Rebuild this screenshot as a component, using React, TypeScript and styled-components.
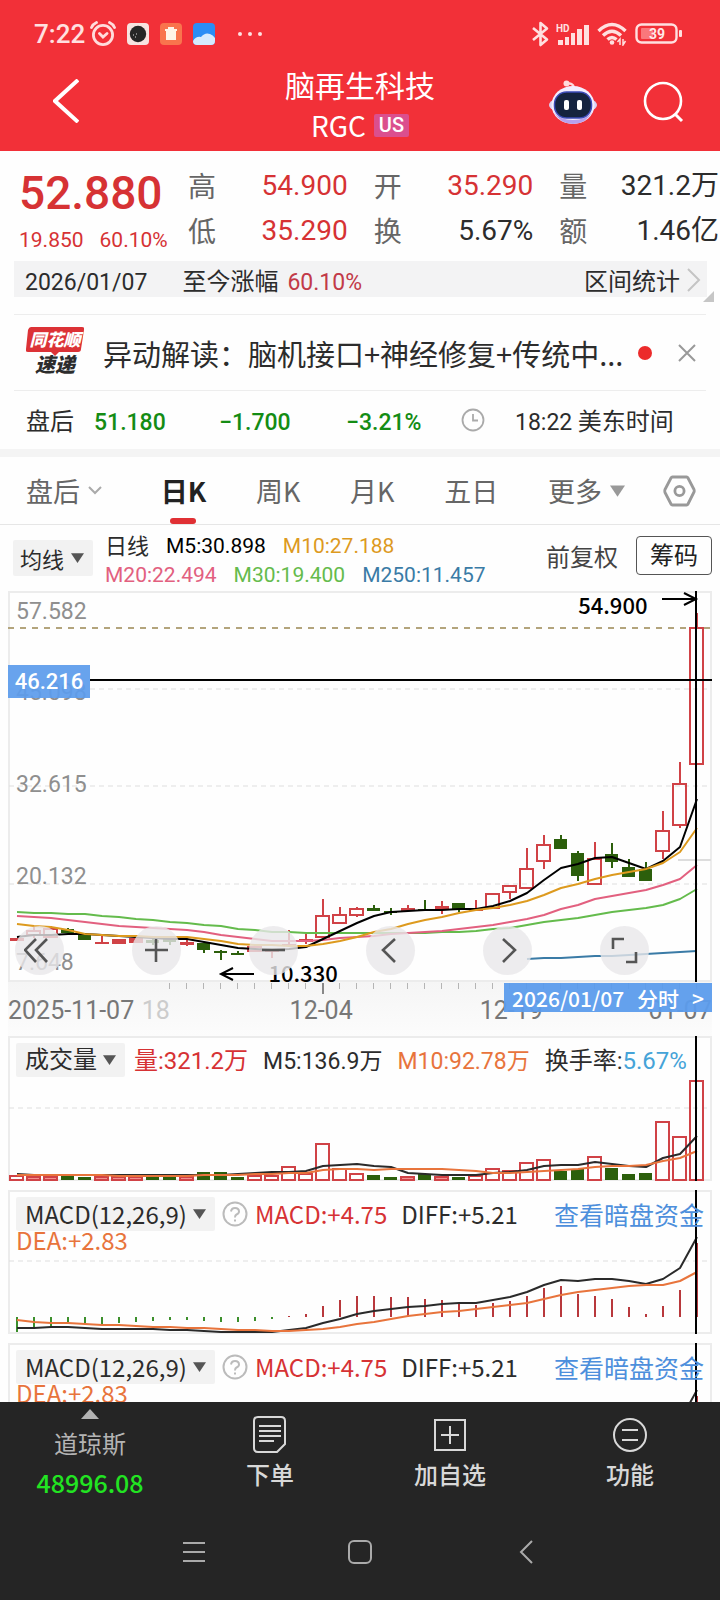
import React from 'react';
import styled, { createGlobalStyle, css } from 'styled-components';

const NUM = `Roboto, "Noto Sans CJK SC", sans-serif`;
const TEXT = `"Noto Sans CJK SC", Roboto, sans-serif`;
const RED = '#d63234';
const CANDLE_RED = '#d04246';
const CANDLE_GREEN = '#2c5f0c';

const Global = createGlobalStyle`
  *, *::before, *::after { box-sizing: border-box; }
  body { margin: 0; background: #fefefe; color: #2c2c2c; font-family: ${TEXT}; }
  button, select { font: inherit; color: inherit; border: 0; background: none; padding: 0; margin: 0; cursor: pointer; }
  a { text-decoration: none; }
  svg { display: block; flex: none; }
  dl, dt, dd, h1, p { margin: 0; font-weight: inherit; }
`;

/* ---------- page shell ---------- */

const Page = styled.div`
  height: 100vh;
  display: flex;
  flex-direction: column;
  overflow: hidden;
`;

const Content = styled.main`
  flex: 1;
  min-height: 0;
  overflow: hidden;
`;

/* ---------- header ---------- */

const Top = styled.header`
  background: #f23038;
  color: #fff;
  flex: none;
  height: 151px;
`;

const StatusBar = styled.div`
  height: 68px;
  padding: 0 38px 0 34px;
  display: flex;
  align-items: center;
  justify-content: space-between;
  color: #ffe0e0;
`;

const StatusGroup = styled.div<{ $gap: number }>`
  display: flex;
  align-items: center;
  gap: ${p => p.$gap}px;
`;

const Clock = styled.span`
  font: 500 26px/32px ${NUM};
`;

const TitleBar = styled.div`
  display: grid;
  grid-template-columns: 1fr auto 1fr;
  align-items: start;
  padding: 0 36px;
`;

const BackButton = styled.button`
  display: flex;
  margin: 11px 0 0 17px;
`;

const TitleText = styled.div`
  display: flex;
  flex-direction: column;
  align-items: center;
`;

const StockName = styled.h1`
  font-size: 30px;
  line-height: 32px;
  font-weight: 400;
`;

const Ticker = styled.p`
  display: flex;
  align-items: center;
  gap: 8px;
  font-size: 28px;
  line-height: 50px;
`;

const Market = styled.span`
  background: #db4f8e;
  font: 500 20px/23px ${NUM};
  padding: 0 5px;
  border-radius: 2px;
`;

const HeaderActions = styled.div`
  display: flex;
  justify-content: flex-end;
  align-items: center;
  gap: 44px;
  margin-top: 11px;
`;

/* ---------- quote ---------- */

const Quote = styled.section`
  display: flex;
  height: 110px;
  padding: 12px 1px 0 19px;
`;

const PriceBlock = styled.div`
  flex: none;
  width: 169px;
  color: ${RED};
  font-family: ${NUM};
`;

const Price = styled.p`
  font-size: 46px;
  line-height: 60px;
  font-weight: 500;
`;

const Change = styled.p`
  display: flex;
  gap: 16px;
  font-size: 21px;
  line-height: 34px;
`;

const Stats = styled.dl`
  flex: 1;
  display: grid;
  grid-template-columns: repeat(3, 1fr);
  grid-auto-rows: 45px;
  column-gap: 26px;
`;

const Stat = styled.div<{ $up?: boolean }>`
  display: flex;
  justify-content: space-between;
  font-size: 28px;
  line-height: 45px;
  white-space: nowrap;
  dt { color: #666; }
  dd { font-family: ${NUM}; color: ${p => (p.$up ? RED : '#2c2c2c')}; }
`;

const RangeBar = styled.div`
  position: relative;
  margin: 0 13px 0 14px;
  height: 36px;
  padding: 2px 6px 0 11px;
  background: #f3f3f4;
  display: flex;
  align-items: baseline;
  font-size: 24px;
  line-height: 34px;
  &::after {
    content: '';
    position: absolute;
    right: -7px;
    bottom: -5px;
    border-style: solid;
    border-width: 0 0 11px 11px;
    border-color: transparent transparent #c6c6c6 transparent;
  }
`;

const Figure = styled.span<{ $color?: string; $ml?: number }>`
  font-family: ${NUM};
  font-size: 23px;
  color: ${p => p.$color ?? 'inherit'};
  margin-left: ${p => p.$ml ?? 0}px;
`;

const RangeLabel = styled.span`
  margin-left: 35px;
`;

const RangeButton = styled.button`
  margin-left: auto;
  display: flex;
  align-items: center;
  gap: 7px;
`;

/* ---------- news and after-hours ---------- */

const News = styled.section`
  margin: 17px 14px 0;
  height: 76px;
  padding: 0 10px 0 12px;
  display: flex;
  align-items: center;
  border-top: 1px solid #ededed;
`;

const NewsTitle = styled.a`
  flex: 1;
  min-width: 0;
  margin-left: 19px;
  font-size: 29px;
  line-height: 40px;
  color: #2c2c2c;
  white-space: nowrap;
  overflow: hidden;
`;

const Dot = styled.span`
  width: 14px;
  height: 14px;
  border-radius: 50%;
  background: #ec2b2b;
  margin-right: 26px;
`;

const AfterHours = styled.section`
  margin: 0 14px;
  padding: 0 12px;
  height: 59px;
  display: grid;
  grid-template-columns: 68px 125px 127px 115px 54px 1fr;
  align-content: center;
  align-items: baseline;
  border-top: 1px solid #ededed;
  font-size: 24px;
  white-space: nowrap;
  svg { align-self: center; }
`;

const Down = styled.span`
  font: 500 23px/30px ${NUM};
  color: #148c14;
`;

/* ---------- tabs ---------- */

const Tabs = styled.nav`
  border-top: 8px solid #f4f4f4;
  border-bottom: 1px solid #e6e6e6;
  height: 76px;
  padding: 0 24px 0 26px;
  display: flex;
  gap: 38px;
`;

const TabGroup = styled.div`
  flex: 1;
  display: flex;
  justify-content: space-between;
`;

const Tab = styled.button<{ $active?: boolean; $pad?: number }>`
  position: relative;
  display: flex;
  align-items: center;
  gap: 8px;
  font-size: 27px;
  color: #666;
  padding-right: ${p => p.$pad ?? 0}px;
  ${p =>
    p.$active &&
    css`
      color: #222;
      font-weight: 700;
      &::after {
        content: '';
        position: absolute;
        left: 50%;
        bottom: 0;
        width: 26px;
        height: 6px;
        margin-left: -13px;
        border-radius: 3px;
        background: #e03034;
      }
    `}
`;

/* ---------- indicator legend ---------- */

const Legend = styled.section`
  height: 66px;
  padding: 0 8px 0 13px;
  display: flex;
  align-items: center;
`;

const Picker = styled.label<{ $height: number }>`
  display: inline-flex;
  align-items: center;
  flex: none;
  background: #f2f2f2;
  border-radius: 2px;
  height: ${p => p.$height}px;
  svg { margin-left: -24px; pointer-events: none; }
  padding-right: 9px;
`;

const PickerSelect = styled.select<{ $inset: number; $size: number }>`
  appearance: none;
  font-size: ${p => p.$size}px;
  line-height: 34px;
  padding: 0 30px 0 ${p => p.$inset}px;
  color: #2c2c2c;
`;

const Averages = styled.div`
  flex: 1;
  margin-left: 12px;
  padding-top: 6px;
  font: 21px/29px ${NUM};
`;

const AverageLine = styled.div<{ $gap: number }>`
  display: flex;
  gap: ${p => p.$gap}px;
  white-space: nowrap;
`;

const Period = styled.span`
  font-size: 22px;
`;

const Tint = styled.span<{ $color: string }>`
  color: ${p => p.$color};
`;

const PlainButton = styled.button`
  font-size: 24px;
  line-height: 34px;
  padding-bottom: 4px;
  color: #444;
`;

const OutlineButton = styled(PlainButton)`
  margin: -6px 0 0 18px;
  width: 76px;
  height: 39px;
  border: 1px solid #555;
  border-radius: 4px;
  color: #222;
`;

/* ---------- charts ---------- */

const Frame = styled.section`
  position: relative;
  margin: 0 8px;
`;

const Panel = styled.section`
  margin: 0 8px 9px;
  display: grid;
  > * { grid-area: 1 / 1; }
`;

const PanelHead = styled.div`
  z-index: 1;
  align-self: start;
  padding: 7px 8px 0;
  white-space: nowrap;
`;

const PanelRow = styled.div<{ $gap: number; $font: string }>`
  display: flex;
  align-items: center;
  gap: ${p => p.$gap}px;
  font: ${p => p.$font};
`;

const Readout = styled.span<{ $color?: string; $size?: number }>`
  padding-top: 3px;
  font-size: ${p => p.$size ?? 23}px;
  color: ${p => p.$color ?? '#2c2c2c'};
`;

const DiffValue = styled.span`
  margin-left: 7px;
`;

const DarkPoolLink = styled.a`
  margin-left: auto;
  font-size: 25px;
  color: #4d8fdc;
`;

const SecondLine = styled.p`
  margin-top: -2px;
  font-size: 24px;
  line-height: 21px;
  color: #e8743c;
`;

const Plot = styled.svg`
  width: 100%;
  height: auto;
`;

const AxisLabel = styled.span<{ $top: number }>`
  position: absolute;
  left: 8px;
  top: ${p => p.$top}px;
  font: 23px/30px ${NUM};
  color: #8f8f8f;
`;

const PriceTag = styled.span`
  position: absolute;
  left: 0;
  top: 74px;
  width: 82px;
  font: 500 22px/33px ${NUM};
  text-align: center;
  color: #fff;
  background: rgba(92, 156, 236, 0.93);
`;

const Extreme = styled.span<{ $left: string; $top: number }>`
  position: absolute;
  left: ${p => p.$left};
  top: ${p => p.$top}px;
  font: 500 22px/26px ${TEXT};
  color: #000;
`;

const ChartTools = styled.div`
  position: absolute;
  left: 1%;
  right: 9%;
  top: 335px;
  display: flex;
  justify-content: space-between;
`;

const Tool = styled.button`
  width: 49px;
  height: 49px;
  border-radius: 50%;
  background: rgba(233, 231, 234, 0.8);
  display: grid;
  place-items: center;
`;

const DateAxis = styled.div`
  position: relative;
  margin: 0 8px;
  height: 54px;
  background: linear-gradient(#f5f5f5, #fcfcfc);
`;

const DateRow = styled.div`
  display: flex;
  font: 25px/36px ${NUM};
  color: #777;
  margin-top: -1px;
`;

const DateText = styled.span<{ $width?: string; $color?: string }>`
  width: ${p => p.$width ?? 'auto'};
  color: ${p => p.$color ?? 'inherit'};
  white-space: nowrap;
`;

const DateTag = styled.button`
  position: absolute;
  right: 0;
  top: 1px;
  width: 208px;
  height: 29px;
  padding: 2px 8px 0;
  display: flex;
  justify-content: space-between;
  align-items: center;
  font: 500 21px/27px ${TEXT};
  color: #fff;
  background: rgba(92, 156, 236, 0.95);
`;

/* ---------- bottom bars ---------- */

const Bottom = styled.footer`
  flex: none;
  height: 198px;
  background: #252525;
  color: #d8d8d8;
`;

const Actions = styled.div`
  display: grid;
  grid-template-columns: repeat(4, 1fr);
  height: 106px;
`;

const Action = styled.button`
  display: flex;
  flex-direction: column;
  align-items: center;
  padding-top: 14px;
  font-size: 24px;
  line-height: 40px;
  font-weight: 500;
`;

const IndexButton = styled.button`
  display: flex;
  flex-direction: column;
  align-items: center;
  padding-top: 7px;
  font-size: 24px;
  line-height: 40px;
  color: #b4b4b4;
  svg { margin-bottom: 4px; }
`;

const IndexValue = styled.span`
  font: 500 25px/39px ${TEXT};
  color: #22e422;
`;

const SystemNav = styled.nav`
  display: flex;
  justify-content: center;
  align-items: center;
  gap: 142px;
  height: 88px;
`;

const IconButton = styled.button`
  display: flex;
`;

const SystemButton = styled.button`
  width: 24px;
  display: flex;
  justify-content: center;
`;

/* ---------- data ---------- */

// kind, high, low, body top, body bottom for each trading day, in plot units
type Candle = ['r' | 'g', number, number, number, number];
const candles: Candle[] = [
  ['r', 347, 350, 347, 350], ['r', 336, 347, 339, 345], ['r', 335, 347, 337, 347],
  ['g', 337, 342, 338, 342], ['g', 343, 349, 343, 349], ['r', 345, 353, 351, 353],
  ['r', 348, 353, 348, 353], ['r', 347, 352, 347, 352], ['g', 347, 354, 349, 352],
  ['g', 347, 354, 348, 351], ['r', 349, 355, 351, 354], ['g', 352, 362, 352, 359],
  ['g', 359, 369, 360, 362], ['g', 360, 364, 362, 364], ['r', 354, 361, 355, 361],
  ['r', 358, 367, 358, 361], ['r', 339, 356, 353, 355], ['r', 343, 353, 348, 351],
  ['r', 308, 347, 324, 347], ['r', 316, 333, 323, 333], ['r', 316, 326, 317, 325],
  ['g', 314, 320, 317, 320], ['g', 317, 324, 320, 322], ['r', 314, 320, 317, 320],
  ['g', 309, 320, 318, 320], ['r', 310, 323, 315, 319], ['g', 312, 321, 312, 319],
  ['r', 309, 320, 317, 320], ['r', 302, 318, 302, 318], ['r', 294, 308, 294, 302],
  ['r', 257, 298, 277, 298], ['r', 244, 278, 253, 271], ['g', 244, 258, 248, 258],
  ['g', 260, 290, 262, 285], ['r', 251, 294, 267, 294], ['g', 252, 277, 263, 271],
  ['g', 268, 286, 276, 286], ['g', 271, 290, 278, 290], ['r', 220, 268, 239, 261],
  ['r', 171, 237, 192, 235], ['r', 22, 174, 36, 174],
];

const averages: { color: string; from: number; ys: number[] }[] = [
  { color: '#64bb4c', from: 0, ys: [321, 322, 322, 323, 323, 325, 326, 328, 329, 331, 332, 334, 335, 338, 339, 341, 341, 342, 342, 342, 342, 342, 342, 342, 342, 341, 341, 340, 338, 337, 334, 331, 329, 327, 324, 321, 319, 317, 314, 308, 298] },
  { color: '#e2607f', from: 0, ys: [325, 326, 327, 329, 331, 333, 335, 336, 337, 338, 339, 341, 344, 346, 348, 350, 350, 350, 349, 347, 346, 345, 343, 342, 341, 340, 338, 336, 334, 331, 328, 324, 318, 314, 308, 305, 302, 299, 294, 288, 274] },
  { color: '#000', from: 0, ys: [346, 344, 344, 343, 343, 344, 345, 346, 347, 348, 348, 351, 354, 357, 358, 359, 358, 356, 348, 340, 332, 325, 321, 320, 319, 319, 318, 318, 315, 310, 302, 289, 277, 273, 267, 266, 272, 278, 270, 256, 208] },
  { color: '#dd9a1e', from: 0, ys: [333, 335, 336, 339, 343, 344, 345, 345, 346, 346, 346, 348, 350, 353, 354, 354, 355, 355, 353, 350, 346, 341, 338, 333, 329, 326, 322, 319, 317, 314, 310, 304, 297, 293, 288, 284, 281, 278, 272, 261, 237] },
  { color: '#3a7ba6', from: 30, ys: [368, 367, 367, 366, 365, 365, 364, 363, 362, 361, 360] },
];

const volumeTops = [139, 140, 140, 139, 141, 140, 140, 140, 141, 141, 140, 136, 136, 141, 139, 139, 130, 137, 107, 132, 137, 139, 141, 140, 138, 140, 141, 139, 132, 134, 126, 123, 135, 133, 120, 132, 138, 137, 85, 100, 44];
const volumeM5 = [138, 139, 139, 139, 139, 139, 139, 139, 139, 139, 139, 139, 139, 138, 137, 136, 136, 135, 130, 129, 128, 130, 131, 137, 138, 139, 139, 139, 137, 136, 134, 130, 129, 129, 126, 128, 130, 131, 122, 118, 100];
const volumeM10 = [139, 139, 139, 139, 139, 139, 140, 140, 140, 140, 140, 139, 139, 139, 138, 138, 137, 137, 134, 133, 133, 134, 133, 133, 133, 133, 134, 135, 137, 137, 136, 135, 134, 133, 131, 130, 130, 129, 125, 122, 115];

const macdEnds = [142, 139, 136, 133, 133, 134, 133, 132, 131, 130, 130, 131, 132, 132, 131, 129, 126, 124, 116, 110, 106, 106, 107, 107, 109, 110, 114, 115, 113, 111, 106, 98, 96, 104, 106, 109, 117, 124, 116, 100, 53];
const diff = [138, 138, 137, 137, 138, 139, 139, 139, 139, 140, 140, 141, 142, 142, 142, 142, 140, 138, 133, 129, 124, 121, 119, 117, 116, 114, 113, 113, 110, 107, 102, 95, 90, 91, 89, 89, 91, 94, 89, 78, 47];
const dea = [130, 132, 133, 133, 134, 135, 135, 136, 137, 137, 138, 138, 139, 140, 140, 141, 141, 140, 139, 137, 134, 132, 129, 126, 124, 122, 121, 119, 117, 115, 113, 109, 105, 102, 100, 98, 96, 95, 95, 91, 82];

const dayX = (i: number) => 9 + 17 * i;
const points = (ys: number[], from = 0) => ys.map((y, i) => `${dayX(i + from)},${y}`).join(' ');

/* ---------- chart parts ---------- */

const Line = ({ ys, color, from = 0 }: { ys: number[]; color: string; from?: number }) => (
  <polyline points={points(ys, from)} fill="none" stroke={color} strokeWidth="2" strokeLinejoin="round" />
);

const Grid = ({ y }: { y: number }) => (
  <line x1="1" x2="703" y1={y} y2={y} stroke="#dedede" strokeWidth="1" strokeDasharray="5 4" />
);

const Border = ({ height }: { height: number }) => (
  <rect x="1" y="1" width="702" height={height - 2} fill="none" stroke="#ececec" strokeWidth="2" />
);

const Cursor = ({ height }: { height: number }) => (
  <line x1="688" x2="688" y1="0" y2={height} stroke="#000" strokeWidth="2" />
);

const CandlePlot = () => (
  <Plot viewBox="0 0 704 391" role="img" aria-label="日K线图">
    <Border height={391} />
    {[98, 195, 293].map(y => <Grid key={y} y={y} />)}
    <line x1="670" x2="703" y1="269" y2="269" stroke="#ddd" strokeWidth="2" />
    <line x1="0" x2="703" y1="37" y2="37" stroke="#b3a47c" strokeWidth="2" strokeDasharray="6 6" />
    {candles.map(([kind, high, low, top, bottom], i) => {
      const x = dayX(i);
      const h = bottom - top;
      if (kind === 'g') {
        return (
          <g key={i} fill={CANDLE_GREEN}>
            <rect x={x - 1} y={high} width="2" height={low - high} />
            <rect x={x - 7} y={top} width="13" height={h} />
          </g>
        );
      }
      return (
        <g key={i} fill={CANDLE_RED}>
          <rect x={x - 1} y={high} width="2" height={top - high} />
          <rect x={x - 1} y={bottom} width="2" height={Math.max(low - bottom, 0)} />
          {h > 5 ? (
            <rect x={x - 7} y={top + 1} width="13" height={h - 2} fill="none" stroke={CANDLE_RED} strokeWidth="2" />
          ) : (
            <rect x={x - 7} y={top} width="14" height={h} />
          )}
        </g>
      );
    })}
    {averages.map(a => <Line key={a.color} ys={a.ys} color={a.color} from={a.from} />)}
    <line x1="82" x2="704" y1="89" y2="89" stroke="#000" strokeWidth="2" />
    <Cursor height={391} />
    <path d="M654 8H687M676 2L688 8L676 14" fill="none" stroke="#000" strokeWidth="2" />
    <path d="M246 383H214M225 377L213 383L225 389" fill="none" stroke="#000" strokeWidth="2" />
  </Plot>
);

const VolumePlot = () => (
  <Plot viewBox="0 0 704 145" role="img" aria-label="成交量图">
    <Border height={145} />
    <Grid y={72} />
    {volumeTops.map((top, i) => {
      const x = dayX(i);
      return candles[i][0] === 'g' ? (
        <rect key={i} x={x - 7} y={top} width="13" height={144 - top} fill={CANDLE_GREEN} />
      ) : (
        <rect key={i} x={x - 7} y={top + 1} width="13" height={143 - top} fill={top > 139 ? '#f28f8f' : 'none'} stroke={CANDLE_RED} strokeWidth="2" />
      );
    })}
    <Line ys={volumeM5} color="#2a2a2a" />
    <Line ys={volumeM10} color="#e8743c" />
    <Cursor height={145} />
  </Plot>
);

const MacdPlot = () => (
  <Plot viewBox="0 0 704 144" role="img" aria-label="MACD图">
    <Border height={144} />
    <Grid y={71} />
    {macdEnds.map((end, i) => (
      <rect
        key={i}
        x={dayX(i) - 1}
        y={Math.min(end, 127)}
        width="2"
        height={Math.abs(end - 127)}
        fill={end > 127 ? '#3c8f2c' : '#b8383c'}
      />
    ))}
    <Line ys={diff} color="#2a2a2a" />
    <Line ys={dea} color="#e8743c" />
    <Cursor height={144} />
  </Plot>
);

/* ---------- small icons ---------- */

const Caret = ({ width = 13, color = '#555' }: { width?: number; color?: string }) => (
  <svg width={width} height={width - 3} viewBox="0 0 12 9" aria-hidden="true">
    <path d="M0 0H12L6 9Z" fill={color} />
  </svg>
);

const Chevron = ({ w, h, sw, color, right = false }: { w: number; h: number; sw: number; color: string; right?: boolean }) => (
  <svg width={w} height={h} viewBox={`0 0 ${w} ${h}`} fill="none" stroke={color} strokeWidth={sw} aria-hidden="true">
    <path d={right ? `M1 1L${w - 2} ${h / 2}L1 ${h - 1}` : `M${w - 1} 1L2 ${h / 2}L${w - 1} ${h - 1}`} />
  </svg>
);

const AlarmIcon = () => (
  <svg width="26" height="26" viewBox="0 0 26 26" fill="none" stroke="#ffdcdc" strokeWidth="2.8" strokeLinecap="round">
    <circle cx="13" cy="14" r="9.6" />
    <path d="M1.5 6.5Q3 3 6.5 1.5M24.5 6.5Q23 3 19.5 1.5M9.5 12.5L13 16L17 12.5" />
  </svg>
);

const CameraAppIcon = () => (
  <svg width="22" height="22" viewBox="0 0 22 22">
    <rect width="22" height="22" rx="4" fill="#f7e3e0" />
    <circle cx="11" cy="11" r="8.2" fill="#262626" />
    <path d="M6 12h1M8 14h1M9 11h1" stroke="#ddd" strokeWidth="1" />
  </svg>
);

const TrashAppIcon = () => (
  <svg width="22" height="22" viewBox="0 0 22 22">
    <rect width="22" height="22" rx="4" fill="#f9744d" />
    <path d="M5 6H17V8H16V17H6V8H5ZM8 4H14V6H8Z" fill="#fff4e8" />
  </svg>
);

const CloudAppIcon = () => (
  <svg width="22" height="22" viewBox="0 0 22 22">
    <rect width="22" height="22" rx="4" fill="#2a8df5" />
    <path d="M0 18Q3 13 8 14Q12 9 17 11Q20 12 22 15V18Q22 22 18 22H4Q0 22 0 18Z" fill="#d5eafd" />
  </svg>
);

const DotsIcon = () => (
  <svg width="26" height="6" viewBox="0 0 26 6" fill="#ffe0e0">
    <circle cx="3" cy="3" r="2" /><circle cx="13" cy="3" r="2" /><circle cx="23" cy="3" r="2" />
  </svg>
);

const BluetoothIcon = () => (
  <svg width="17" height="26" viewBox="0 0 17 26" fill="none" stroke="#ffe0e0" strokeWidth="2.6" strokeLinejoin="round">
    <path d="M1 7L15 18.5L8.5 24V2L15 7.500L1 19" />
  </svg>
);

const SignalIcon = () => (
  <svg width="34" height="24" viewBox="0 0 34 24">
    <g fill="#ffe0e0">
      <rect x="2" y="18" width="5" height="5" /><rect x="9" y="15" width="4" height="8" />
      <rect x="15" y="11" width="4" height="12" /><rect x="21" y="7" width="5" height="16" />
      <rect x="28" y="3" width="5" height="20" />
      <text x="0" y="10" fontSize="10" fontWeight="700" fontFamily="Roboto, sans-serif">HD</text>
    </g>
  </svg>
);

const WifiIcon = () => (
  <svg width="31" height="24" viewBox="0 0 31 24" fill="none" stroke="#ffe0e0" strokeWidth="3.4">
    <path d="M1.5 9Q15 -4 28.5 9M6 13.5Q15 5 24 13.5M10.5 17.5Q15 13.5 19.5 17.5" />
    <circle cx="15" cy="20.5" r="2.3" fill="#ffe0e0" stroke="none" />
    <path d="M23 23V17L20.5 20M26 17V23L28.5 19" strokeWidth="1.5" />
  </svg>
);

const BatteryIcon = () => (
  <svg width="47" height="22" viewBox="0 0 47 22">
    <rect x="1.5" y="1.5" width="40" height="18" rx="5" fill="none" stroke="#ffe0e0" strokeWidth="2.4" />
    <rect x="6" y="5" width="12" height="11" rx="1" fill="#fa777b" />
    <rect x="44" y="7" width="3" height="7" rx="1" fill="#ffe0e0" />
    <text x="22" y="15.5" textAnchor="middle" fontSize="14" fontWeight="700" fontFamily="Roboto, sans-serif" fill="#ffe8e8">39</text>
  </svg>
);

const RobotIcon = () => (
  <svg width="50" height="46" viewBox="0 0 50 46">
    <path d="M18 5Q25 3 26 9" fill="none" stroke="#ffd7dc" strokeWidth="2.5" />
    <circle cx="18.5" cy="4.5" r="3" fill="#ffd9dc" />
    <ellipse cx="25" cy="26" rx="24" ry="9" fill="#dcd2f4" />
    <ellipse cx="25" cy="26" rx="21.5" ry="19" fill="#f3edff" />
    <path d="M6 33Q12 45 25 45Q38 45 44 33Q38 41 25 41Q12 41 6 33Z" fill="#b7a0ee" />
    <rect x="6.5" y="13" width="37" height="26" rx="12" fill="#15233f" stroke="#3b4bb8" strokeWidth="1.5" />
    <rect x="16" y="21" width="5" height="10" rx="2" fill="#fff" />
    <rect x="29" y="21" width="5" height="10" rx="2" fill="#fff" />
  </svg>
);

const SearchIcon = () => (
  <svg width="42" height="42" viewBox="0 0 42 42" fill="none" stroke="#fff" strokeWidth="2.6">
    <circle cx="21" cy="20" r="18" /><path d="M33 33L40 40" strokeWidth="3" />
  </svg>
);

const LogoPlate = styled.div`
  flex: none;
  width: 58px;
  display: grid;
  > * { grid-area: 1 / 1; }
`;

const LogoText = styled.div`
  z-index: 1;
  font: italic 900 17px/23px ${TEXT};
  text-align: center;
  color: #fff;
`;

const LogoSub = styled.div`
  font-size: 20px;
  line-height: 28px;
  color: #2c2c2c;
`;

const ClockIcon = () => (
  <svg width="24" height="24" viewBox="0 0 24 24" fill="none" stroke="#aaa" strokeWidth="1.8">
    <circle cx="12" cy="12" r="10.5" /><path d="M12 6V12.500H17" />
  </svg>
);

const HexIcon = () => (
  <svg width="33" height="32" viewBox="0 0 33 32" fill="none" stroke="#999" strokeWidth="2.8" strokeLinejoin="round">
    <path d="M9.5 2H23.5Q24.5 2 25 3L31 14.5Q31.5 16 31 17L25 29Q24.5 30 23.5 30H9.5Q8.5 30 8 29L2 17.5Q1.5 16 2 14.5L8 3Q8.5 2 9.5 2Z" />
    <circle cx="16.5" cy="16" r="4.6" />
  </svg>
);

const HelpIcon = () => (
  <svg width="26" height="26" viewBox="0 0 26 26" fill="none" stroke="#bbb" strokeWidth="2">
    <circle cx="13" cy="13" r="11.5" />
    <path d="M9 10.5Q9.5 7 13 7Q17 7 17 10.5Q17 12.5 14.5 13.5Q13 14.3 13 16.5M13 18.5V20.5" />
  </svg>
);

const toolShapes: [string, string][] = [
  ['最早', 'M23 4L12 15L23 27M12 4L1 15L12 27'],
  ['放大', 'M15 4V27M4 15H27'],
  ['缩小', 'M4 15H27'],
  ['向左', 'M20 4L8 15L20 27'],
  ['向右', 'M11 4L23 15L11 27'],
  ['全屏', 'M4 14V4H15M17 27H27V17'],
];

/* ---------- composed parts ---------- */

const Dropdown = ({ label, name, inset, size = 24, height = 34 }: { label: string; name: string; inset: number; size?: number; height?: number }) => (
  <Picker $height={height}>
    <PickerSelect $inset={inset} $size={size} aria-label={name} defaultValue={label}>
      <option>{label}</option>
    </PickerSelect>
    <Caret />
  </Picker>
);

const MacdPanel = () => (
  <Panel>
    <MacdPlot />
    <PanelHead>
      <PanelRow $gap={7} $font={`24px/34px ${TEXT}`}>
        <Dropdown label="MACD(12,26,9)" name="副图指标" inset={9} />
        <HelpIcon />
        <Tint $color={RED}>MACD:+4.75</Tint>
        <DiffValue>DIFF:+5.21</DiffValue>
        <DarkPoolLink href="#dark-pool">查看暗盘资金</DarkPoolLink>
      </PanelRow>
      <SecondLine>DEA:+2.83</SecondLine>
    </PanelHead>
  </Panel>
);

export default function App() {
  return (
    <Page>
      <Global />
      <Top>
        <StatusBar>
          <StatusGroup $gap={11}>
            <StatusGroup $gap={5}>
              <Clock>7:22</Clock>
              <AlarmIcon />
            </StatusGroup>
            <CameraAppIcon />
            <TrashAppIcon />
            <CloudAppIcon />
            <StatusGroup $gap={0} />
            <DotsIcon />
          </StatusGroup>
          <StatusGroup $gap={7}>
            <BluetoothIcon />
            <SignalIcon />
            <WifiIcon />
            <BatteryIcon />
          </StatusGroup>
        </StatusBar>
        <TitleBar>
          <BackButton aria-label="返回"><Chevron w={26} h={44} sw={4} color="#fff" /></BackButton>
          <TitleText>
            <StockName>脑再生科技</StockName>
            <Ticker>RGC <Market>US</Market></Ticker>
          </TitleText>
          <HeaderActions>
            <IconButton aria-label="智能助手"><RobotIcon /></IconButton>
            <IconButton aria-label="搜索"><SearchIcon /></IconButton>
          </HeaderActions>
        </TitleBar>
      </Top>

      <Content>
        <Quote>
          <PriceBlock>
            <Price>52.880</Price>
            <Change><span>19.850</span><span>60.10%</span></Change>
          </PriceBlock>
          <Stats>
            <Stat $up><dt>高</dt><dd>54.900</dd></Stat>
            <Stat $up><dt>开</dt><dd>35.290</dd></Stat>
            <Stat><dt>量</dt><dd>321.2万</dd></Stat>
            <Stat $up><dt>低</dt><dd>35.290</dd></Stat>
            <Stat><dt>换</dt><dd>5.67%</dd></Stat>
            <Stat><dt>额</dt><dd>1.46亿</dd></Stat>
          </Stats>
        </Quote>
        <RangeBar>
          <Figure>2026/01/07</Figure>
          <RangeLabel>至今涨幅</RangeLabel>
          <Figure $color="#c23a48" $ml={9}>60.10%</Figure>
          <RangeButton>区间统计<Chevron w={14} h={24} sw={2} color="#c4c4c4" right /></RangeButton>
        </RangeBar>

        <News>
          <LogoPlate>
            <svg width="58" height="50" viewBox="0 0 58 50" aria-hidden="true">
              <path d="M5 0H56Q59 0 58 3L55 22Q55 25 52 25H33L29 29L25 25H2Q-1 25 0 22L2 3Q3 0 5 0Z" fill="#dc3236" />
            </svg>
            <LogoText>同花顺<LogoSub>速递</LogoSub></LogoText>
          </LogoPlate>
          <NewsTitle href="#news">异动解读：脑机接口+神经修复+传统中...</NewsTitle>
          <Dot />
          <IconButton aria-label="关闭">
            <svg width="18" height="18" viewBox="0 0 18 18" stroke="#999" strokeWidth="2"><path d="M1 1L17 17M17 1L1 17" /></svg>
          </IconButton>
        </News>
        <AfterHours>
          <span>盘后</span>
          <Down>51.180</Down>
          <Down>−1.700</Down>
          <Down>−3.21%</Down>
          <ClockIcon />
          <span><Figure>18:22</Figure> 美东时间</span>
        </AfterHours>

        <Tabs>
          <TabGroup>
            <Tab $pad={9}>
              盘后
              <svg width="14" height="9" viewBox="0 0 14 9" fill="none" stroke="#aaa" strokeWidth="2"><path d="M1 1L7 7L13 1" /></svg>
            </Tab>
            <Tab $active>日K</Tab>
            <Tab>周K</Tab>
            <Tab>月K</Tab>
            <Tab>五日</Tab>
            <Tab>更多<Caret width={15} color="#999" /></Tab>
          </TabGroup>
          <Tab aria-label="设置"><HexIcon /></Tab>
        </Tabs>

        <Legend>
          <Dropdown label="均线" name="主图指标" inset={7} size={22} height={36} />
          <Averages>
            <AverageLine $gap={17}>
              <Period>日线</Period>
              <Tint $color="#000">M5:30.898</Tint>
              <Tint $color="#dd9a1e">M10:27.188</Tint>
            </AverageLine>
            <AverageLine $gap={17}>
              <Tint $color="#e2607f">M20:22.494</Tint>
              <Tint $color="#64bb4c">M30:19.400</Tint>
              <Tint $color="#3a7ba6">M250:11.457</Tint>
            </AverageLine>
          </Averages>
          <PlainButton>前复权</PlainButton>
          <OutlineButton>筹码</OutlineButton>
        </Legend>

        <Frame>
          <CandlePlot />
          <AxisLabel $top={6}>57.582</AxisLabel>
          <AxisLabel $top={87}>45.098</AxisLabel>
          <AxisLabel $top={179}>32.615</AxisLabel>
          <AxisLabel $top={271}>20.132</AxisLabel>
          <AxisLabel $top={357}>7.648</AxisLabel>
          <PriceTag>46.216</PriceTag>
          <Extreme $left="81%" $top={0}>54.900</Extreme>
          <Extreme $left="37%" $top={368}>10.330</Extreme>
          <ChartTools>
            {toolShapes.map(([name, d]) => (
              <Tool key={name} aria-label={name}>
                <svg width="31" height="31" viewBox="0 0 31 31" fill="none" stroke="#555" strokeWidth="2.6"><path d={d} /></svg>
              </Tool>
            ))}
          </ChartTools>
        </Frame>
        <DateAxis>
          <Plot viewBox="0 0 704 12" aria-hidden="true">
            {candles.map((_, i) =>
              i < 9 ? null : (
                <rect key={i} x={dayX(i) - 1} y="1" width={i === 18 ? 2 : 1} height={i === 18 ? 11 : 6} fill={i === 18 ? '#888' : '#b5b5b5'} />
              ),
            )}
          </Plot>
          <DateRow>
            <DateText $width="19%">2025-11-07</DateText>
            <DateText $width="21%" $color="#ccc">18</DateText>
            <DateText $width="27%">12-04</DateText>
            <DateText $width="24%">12-19</DateText>
            <DateText>01-07</DateText>
          </DateRow>
          <DateTag><span>2026/01/07</span><span>分时</span><span>&gt;</span></DateTag>
        </DateAxis>

        <Panel>
          <VolumePlot />
          <PanelHead>
            <PanelRow $gap={15} $font={`23px/31px ${NUM}`}>
              <StatusGroup $gap={9}>
                <Dropdown label="成交量" name="成交量指标" inset={9} />
                <Readout $color={RED} $size={24}>量:321.2万</Readout>
              </StatusGroup>
              <Readout>M5:136.9万</Readout>
              <Readout $color="#e8743c">M10:92.78万</Readout>
              <Readout $size={24}>换手率:<Tint $color="#45a3d8">5.67%</Tint></Readout>
            </PanelRow>
          </PanelHead>
        </Panel>
        <MacdPanel />
        <MacdPanel />
      </Content>

      <Bottom>
        <Actions>
          <IndexButton>
            <svg width="18" height="10" viewBox="0 0 18 10"><path d="M9 0L18 10H0Z" fill="#b4b4b4" /></svg>
            <span>道琼斯</span>
            <IndexValue>48996.08</IndexValue>
          </IndexButton>
          <Action>
            <svg width="36" height="38" viewBox="0 0 36 38" fill="none" stroke="#d8d8d8" strokeWidth="2">
              <path d="M6 1H29Q33 1 33 5V28L25 36H6Q2 36 2 32V5Q2 1 6 1ZM33 28L25 36M7 10H29M7 15H29M7 20H29M7 25H22" />
            </svg>
            下单
          </Action>
          <Action>
            <svg width="36" height="38" viewBox="0 0 36 38" fill="none" stroke="#d8d8d8" strokeWidth="2">
              <path d="M3 4H33V34H3ZM18 10V28M9 19H27" />
            </svg>
            加自选
          </Action>
          <Action>
            <svg width="36" height="38" viewBox="0 0 36 38" fill="none" stroke="#d8d8d8" strokeWidth="2">
              <circle cx="18" cy="19" r="16" /><path d="M10 14H26M10 24H26" />
            </svg>
            功能
          </Action>
        </Actions>
        <SystemNav>
          <SystemButton aria-label="最近任务">
            <svg width="24" height="24" viewBox="0 0 24 24" stroke="#aaa" strokeWidth="2"><path d="M1 3H23M1 12H23M1 21H23" /></svg>
          </SystemButton>
          <SystemButton aria-label="主屏幕">
            <svg width="24" height="24" viewBox="0 0 24 24" fill="none" stroke="#aaa" strokeWidth="2"><rect x="1" y="1" width="22" height="22" rx="5" /></svg>
          </SystemButton>
          <SystemButton aria-label="后退"><Chevron w={14} h={24} sw={2} color="#aaa" /></SystemButton>
        </SystemNav>
      </Bottom>
    </Page>
  );
}
